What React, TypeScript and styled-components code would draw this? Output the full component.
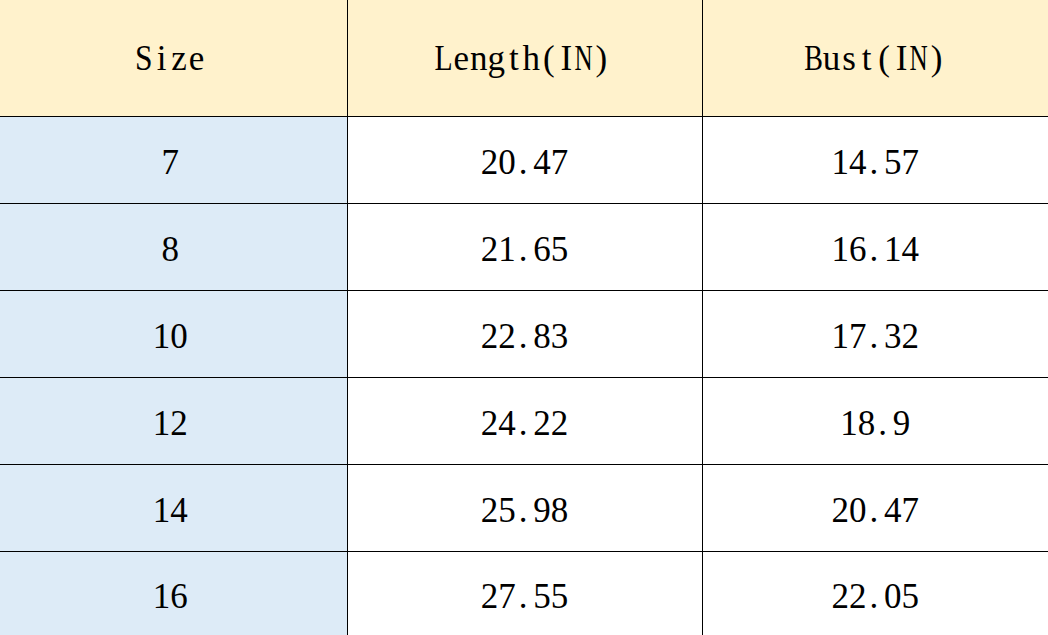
import * as React from 'react';
import styled, { createGlobalStyle } from 'styled-components';

const GlobalStyle = createGlobalStyle`
  html, body {
    margin: 0;
    padding: 0;
    background: #ffffff;
    overflow: hidden;
  }
`;

const rows = [
  { size: '7', length: '20.47', bust: '14.57' },
  { size: '8', length: '21.65', bust: '16.14' },
  { size: '10', length: '22.83', bust: '17.32' },
  { size: '12', length: '24.22', bust: '18.9' },
  { size: '14', length: '25.98', bust: '20.47' },
  { size: '16', length: '27.55', bust: '22.05' },
];

const Table = styled.table`
  border-collapse: collapse;
  table-layout: fixed;
  width: 1048px;
`;

const HeadCell = styled.th<{ $w: number; $shift?: number; $last?: boolean }>`
  box-sizing: border-box;
  width: ${p => p.$w}px;
  height: 116px;
  padding: 3px ${p => p.$shift ?? 0}px 0 0;
  background: #fff2cc;
  border-right: ${p => (p.$last ? 'none' : '1px solid #000')};
  border-bottom: 1px solid #000;
  font-family: "Liberation Serif", "DejaVu Serif", serif;
  font-weight: normal;
  font-size: 35px;
  color: #000;
  text-align: center;
  vertical-align: middle;
  white-space: nowrap;
`;

const Cell = styled.td<{ $size?: boolean; $last?: boolean; $end?: boolean }>`
  height: ${p => (p.$end ? 78 : 80)}px;
  padding: 6px ${p => (p.$size ? 6 : 0)}px 0 0;
  background: ${p => (p.$size ? '#ddebf7' : '#ffffff')};
  border-right: ${p => (p.$last ? 'none' : '1px solid #000')};
  border-bottom: ${p => (p.$end ? 'none' : '1px solid #000')};
  font-family: "Liberation Serif", "DejaVu Serif", serif;
  font-size: 35px;
  color: #000;
  text-align: center;
  vertical-align: middle;
  white-space: nowrap;
`;

// half-width slot per character, like the monospaced font of the original sheet
const Glyph = styled.span<{ $dot?: boolean }>`
  display: inline-flex;
  justify-content: ${p => (p.$dot ? 'flex-start' : 'center')};
  width: 17.5px;
  padding-left: ${p => (p.$dot ? '3px' : '0')};
  box-sizing: border-box;
`;

const Squeeze = styled.span<{ $x: number }>`
  display: inline-block;
  flex: none;
  transform: scaleX(${p => p.$x});
`;

// wide capitals get narrowed so they fit their half-width slot
const narrow: Record<string, number> = { S: 0.9, L: 0.85, B: 0.8, N: 0.72 };

const Mono = ({ text }: { text: string }) => (
  <>
    {text.split('').map((c, i) => (
      <Glyph key={i} $dot={c === '.'}>
        <Squeeze $x={narrow[c] ?? 1}>{c}</Squeeze>
      </Glyph>
    ))}
  </>
);

export default function App() {
  return (
    <>
      <GlobalStyle />
      <Table>
        <colgroup>
          <col style={{ width: 347 }} />
          <col style={{ width: 355 }} />
          <col style={{ width: 346 }} />
        </colgroup>
        <thead>
          <tr>
            <HeadCell $w={347} $shift={6}><Mono text="Size" /></HeadCell>
            <HeadCell $w={355} $shift={4}><Mono text="Length(IN)" /></HeadCell>
            <HeadCell $w={346} $last><Mono text="Bust(IN)" /></HeadCell>
          </tr>
        </thead>
        <tbody>
          {rows.map((r, i) => {
            const end = i === rows.length - 1;
            return (
              <tr key={r.size}>
                <Cell $size $end={end}><Mono text={r.size} /></Cell>
                <Cell $end={end}><Mono text={r.length} /></Cell>
                <Cell $last $end={end}><Mono text={r.bust} /></Cell>
              </tr>
            );
          })}
        </tbody>
      </Table>
    </>
  );
}
